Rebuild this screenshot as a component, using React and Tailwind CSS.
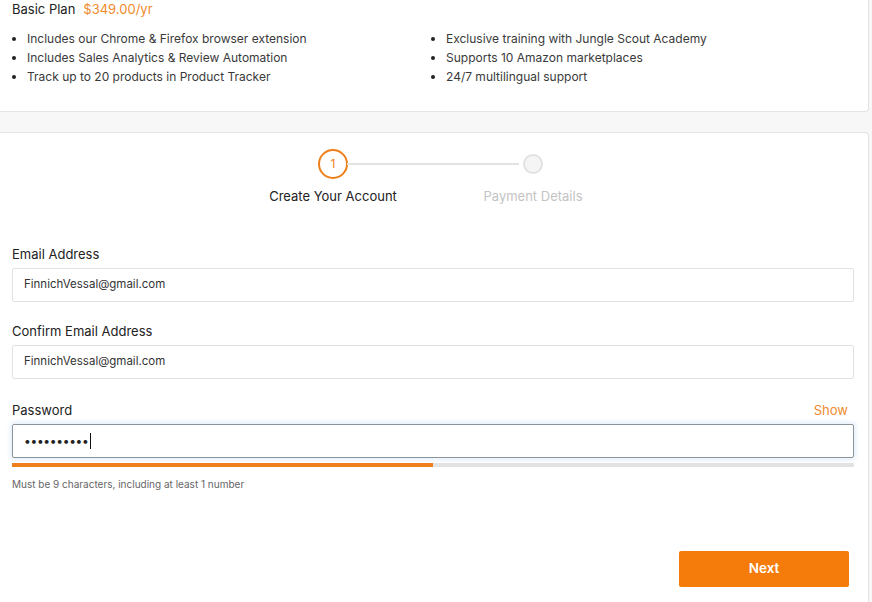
export default function App() {
  const left = [
    "Includes our Chrome & Firefox browser extension",
    "Includes Sales Analytics & Review Automation",
    "Track up to 20 products in Product Tracker",
  ];
  const right = [
    "Exclusive training with Jungle Scout Academy",
    "Supports 10 Amazon marketplaces",
    "24/7 multilingual support",
  ];
  return (
    <div
      className="min-h-[602px] w-[872px] bg-[#f7f7f7] text-[#222]"
      style={{ fontFamily: "Inter, 'Noto Sans', sans-serif" }}
    >
      {/* plan summary */}
      <div className="w-[869px] h-[112px] bg-white border-r border-b border-[#e4e4e4] rounded-br pl-3 pr-[14px]">
        <div className="flex items-baseline gap-2 leading-[18px] text-[13px]">
          <span className="text-[#222]">Basic Plan</span>
          <span className="text-[#f08a2c]">$349.00/yr</span>
        </div>
        <div className="grid grid-cols-2 mt-[11px] text-[12px] text-[#3a3a3a] leading-[19px]">
          <ul className="list-disc pl-[15px] marker:text-[#222]">
            {left.map((t) => (
              <li key={t}>{t}</li>
            ))}
          </ul>
          <ul className="list-disc pl-[13px] marker:text-[#222]">
            {right.map((t) => (
              <li key={t}>{t}</li>
            ))}
          </ul>
        </div>
      </div>

      {/* account form */}
      <div className="mt-[20px] w-[869px] h-[470px] bg-white border-t border-r border-[#e4e4e4] rounded-tr pl-3 pr-[14px] pt-[16px]">
        {/* stepper */}
        <div className="flex justify-center">
          <div className="flex flex-col items-center w-[150px]">
            <div className="w-[30px] h-[30px] rounded-full border-2 border-[#ef7f1a] flex items-center justify-center text-[12px] text-[#ef7f1a]">
              1
            </div>
            <div className="mt-[8px] text-[13px] text-[#222]">Create Your Account</div>
          </div>
          <div className="w-[172px] h-[2px] bg-[#e2e2e2] mt-[14px] -mx-[61px]"></div>
          <div className="flex flex-col items-center w-[150px]">
            <div className="w-[20px] h-[20px] mt-[5px] rounded-full border-2 border-[#e2e2e2] bg-[#f5f5f5]"></div>
            <div className="mt-[13px] text-[13px] text-[#c4c4c4]">Payment Details</div>
          </div>
        </div>

        <div className="mt-[39px]">
          <label className="block text-[13px] leading-[16px] text-[#222]">Email Address</label>
          <div className="mt-[6px] h-[34px] border border-[#e2e2e2] rounded-[2px] flex items-center px-[11px] text-[11.5px] text-[#333]">
            FinnichVessal@gmail.com
          </div>

          <label className="block mt-[21px] text-[13px] leading-[16px] text-[#222]">Confirm Email Address</label>
          <div className="mt-[6px] h-[34px] border border-[#e2e2e2] rounded-[2px] flex items-center px-[11px] text-[11.5px] text-[#333]">
            FinnichVessal@gmail.com
          </div>

          <div className="mt-[23px] flex justify-between items-end text-[13px] leading-[16px]">
            <label className="text-[#222]">Password</label>
            <span className="text-[#f08a2c] mr-[6px]">Show</span>
          </div>
          <div className="mt-[6px] h-[34px] border border-[#8c949c] rounded-[2px] shadow-[0_0_4px_2px_rgba(150,190,235,0.25)] flex items-center px-[11px] text-[#222]">
            <span className="text-[12px] tracking-[-0.3px]">••••••••••</span>
            <span className="ml-px w-px h-[16px] bg-[#111]"></span>
          </div>
          <div className="mt-[5px] h-[4px] bg-[#e3e3e3] rounded-[1px] flex">
            <div className="w-[421px] h-full bg-[#ef7f1a]"></div>
          </div>
          <div className="mt-[10px] text-[10px] text-[#666]">Must be 9 characters, including at least 1 number</div>
        </div>

        <div className="flex justify-end mt-[59px] pr-[5px]">
          <button className="w-[170px] h-[36px] bg-[#f57b0b] rounded-[2px] text-white text-[13.5px] font-semibold">
            Next
          </button>
        </div>
      </div>
    </div>
  );
}
